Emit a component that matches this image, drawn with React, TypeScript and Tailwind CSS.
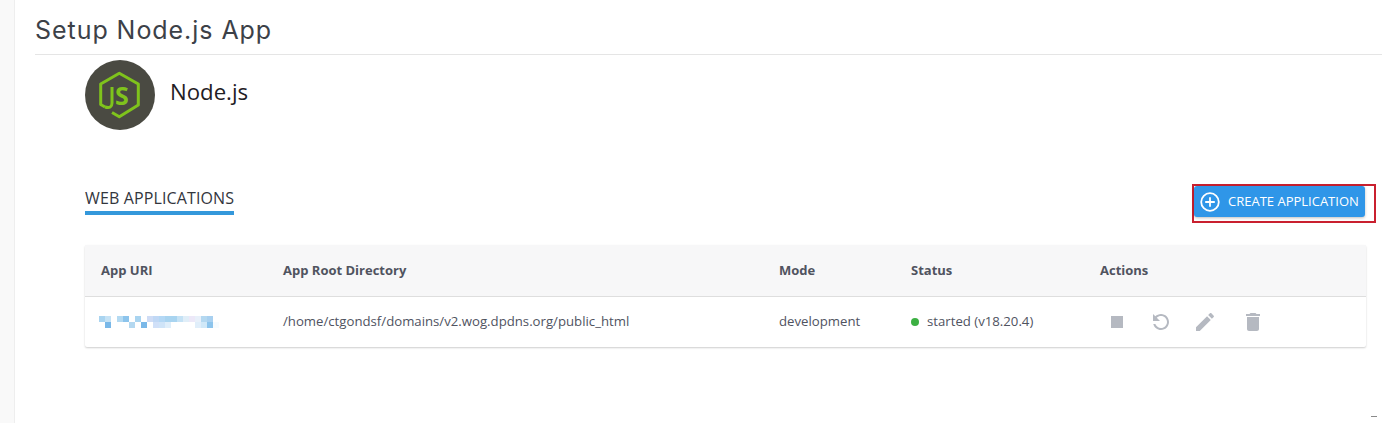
import React from 'react';

const blurCells = [
  [0, 0, '#a9d4f0'], [1, 0, '#c5e2f5'], [3, 0, '#b4daf2'], [4, 0, '#8cc4ec'], [6, 0, '#a9d4f0'],
  [8, 0, '#cfdcf5'], [9, 0, '#c0d8f5'], [10, 0, '#b4d8f5'], [11, 0, '#a9d4f0'], [12, 0, '#a8d4f0'],
  [13, 0, '#c5e2f5'], [14, 0, '#e0eef8'], [15, 0, '#ece8f8'], [16, 0, '#e8f0fa'], [17, 0, '#b4d8f0'], [18, 0, '#a8d0f0'],
  [1, 1, '#7ab8e8'], [5, 1, '#b4d8f0'], [7, 1, '#7ab8e8'], [9, 1, '#d0e0f8'], [10, 1, '#cfe4f8'], [11, 1, '#dfeefa'],
  [16, 1, '#e0eefa'], [17, 1, '#d0e8f8'], [18, 1, '#8cc4ec'], [19, 1, '#f6fbfe'],
] as const;

const columns = [
  { label: 'App URI', width: 'w-[182px]' },
  { label: 'App Root Directory', width: 'w-[496px]' },
  { label: 'Mode', width: 'w-[132px]' },
  { label: 'Status', width: 'w-[189px]' },
  { label: 'Actions', width: 'flex-1' },
];

const Icon = ({ d, className }: { d: string; className?: string }) => (
  <svg width="24" height="24" viewBox="0 0 24 24" fill="#b5b9c1" className={className}>
    <path d={d} />
  </svg>
);

export default function App() {
  return (
    <div className="flex h-[423px] w-[1382px] overflow-hidden bg-white font-['Open_Sans',sans-serif]">
      <div className="w-[15px] shrink-0 border-r border-[#eeeeee] bg-[#f9f9f9]" />

      <div className="flex min-w-0 flex-1 flex-col pl-5">
        <div className="h-[55px] border-b border-[#e5e5e5] pt-[14px]">
          <h1 className="font-['Inter',sans-serif] text-[25px] leading-[32px] tracking-[0.95px] text-[#3c4148]">Setup Node.js App</h1>
        </div>

        <div className="w-[1281px] ml-[50px] flex flex-col">
          <div className="mt-[5px] flex items-start gap-[15px]">
            <div className="h-[70px] w-[70px] rounded-full bg-[#4a4a42]">
              <svg width="70" height="70" viewBox="0 0 70 70">
                <path d="M20 47 L15.7 44.5 V24 L34.3 13.3 L53.3 24 V45 L34.3 56.7 L27 52.5" fill="none" stroke="#7fc31c" strokeWidth="3" strokeLinejoin="round" />
                <path d="M27 27 V43 Q27 49 20 47" fill="none" stroke="#7fc31c" strokeWidth="3" />
                <text x="30" y="45" fontFamily="Open Sans" fontSize="25" fontWeight="700" fill="#7fc31c">S</text>
              </svg>
            </div>
            <span className="mt-[17px] text-[22.2px] leading-[30px] text-[#1f2024]">Node.js</span>
          </div>

          <div className="mt-[54px] flex items-start justify-between">
            <div className="mt-[3px] border-b-4 border-[#3498db] pb-[2px] text-[16px] leading-[22px] tracking-[0.13px] text-[#33363d]">WEB APPLICATIONS</div>
            <div className="mr-[-10px] border-2 border-[#c9202f] pb-[4px] pr-[9px]">
              <button className="flex h-[31px] w-[171px] items-center gap-[8px] rounded-[3px] bg-[#2f96e8] pl-[6px] text-[13px] font-medium text-white shadow-[0_1px_3px_rgba(0,0,0,0.25)]">
                <svg width="20" height="20" viewBox="0 0 20 20" fill="none" stroke="white" strokeWidth="1.8">
                  <circle cx="10" cy="10" r="8.8" />
                  <path d="M10 5.2v9.6M5.2 10h9.6" />
                </svg>
                CREATE APPLICATION
              </button>
            </div>
          </div>

          <div className="mt-[22px] w-[1281px] rounded-[2px] bg-white shadow-[0_1px_2px_rgba(0,0,0,0.2)]">
            <div className="flex h-[52px] items-center border-b border-[#dedede] bg-[#f7f7f8] pl-4 text-[13px] font-bold text-[#50535f]">
              {columns.map(c => (
                <div key={c.label} className={c.width}>{c.label}</div>
              ))}
            </div>
            <div className="flex h-[50px] items-center pl-4 text-[13.2px] text-[#50535f]">
              <div className="w-[182px]">
                <svg width="120" height="14" viewBox="0 0 120 14" className="ml-[-2px] mt-[2px]">
                  {blurCells.map(([x, y, color]) => (
                    <rect key={`${x}-${y}`} x={x * 6} y={y * 6} width="6" height="6" fill={color} />
                  ))}
                </svg>
              </div>
              <div className="w-[496px]">/home/ctgondsf/domains/v2.wog.dpdns.org/public_html</div>
              <div className="w-[132px]">development</div>
              <div className="flex w-[189px] items-center gap-2">
                <span className="h-2 w-2 rounded-full bg-[#3cb043]" />
                started (v18.20.4)
              </div>
              <div className="ml-[5px] flex items-center gap-5">
                <Icon d="M6 6h12v12H6z" />
                <Icon className="-scale-x-100" d="M17.65 6.35C16.2 4.9 14.21 4 12 4c-4.42 0-7.99 3.58-7.99 8s3.57 8 7.99 8c3.73 0 6.84-2.55 7.73-6h-2.08c-.82 2.33-3.04 4-5.65 4-3.31 0-6-2.69-6-6s2.69-6 6-6c1.66 0 3.14.69 4.22 1.78L13 11h7V4l-2.35 2.35z" />
                <Icon d="M3 17.25V21h3.75L17.81 9.94l-3.75-3.75L3 17.25zM20.71 7.04c.39-.39.39-1.02 0-1.41l-2.34-2.34c-.39-.39-1.02-.39-1.41 0l-1.83 1.83 3.75 3.75 1.83-1.83z" />
                <span className="ml-1 flex"><Icon d="M6 19c0 1.1.9 2 2 2h8c1.1 0 2-.9 2-2V7H6v12zM19 4h-3.5l-1-1h-5l-1 1H5v2h14V4z" /></span>
              </div>
            </div>
          </div>
        </div>

        <div className="mt-auto mb-[6px] mr-[5px] self-end h-px w-[6px] bg-[#8a8a8a]" />
      </div>
    </div>
  );
}
